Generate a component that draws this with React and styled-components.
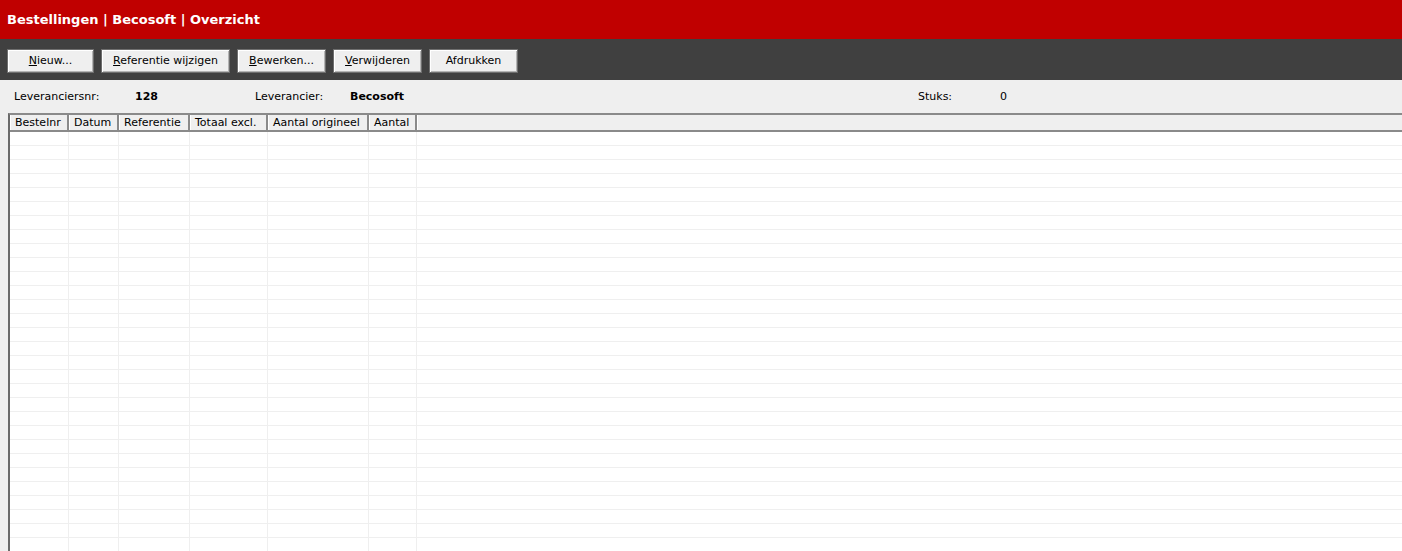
import React from 'react';
import styled, { createGlobalStyle } from 'styled-components';

const GlobalStyle = createGlobalStyle`
  html, body {
    margin: 0;
    padding: 0;
    background: #efefef;
    font-family: "DejaVu Sans", Verdana, sans-serif;
    font-size: 11px;
    color: #000;
    overflow: hidden;
  }
`;

const COLS = '59px 50px 71px 78px 101px 48px 1fr';

const PageSC = styled.div`
  width: 1402px;
  height: 551px;
  display: flex;
  flex-direction: column;
  overflow: hidden;
`;

const TitleBarSC = styled.div`
  height: 39px;
  background: #c00000;
  color: #fff;
  display: flex;
  align-items: center;
  padding: 0 7px;
  font-weight: bold;
  font-size: 13px;
  box-sizing: border-box;
`;

const ToolbarSC = styled.div`
  height: 41px;
  background: #404040;
  display: flex;
  align-items: center;
  gap: 7px;
  padding: 0 7px;
  box-sizing: border-box;
`;

const ButtonSC = styled('button', ['w'])`
  width: ${(props) => props.w}px;
  height: 24px;
  margin-top: 2px;
  background: #efefef;
  border: 1px solid #6e6e6e;
  box-shadow: inset 1px 1px 0 #fff, inset -1px -1px 0 #b4b4b4;
  font-family: inherit;
  font-size: 11px;
  color: #000;
  padding: 0;
  cursor: pointer;

  u {
    text-decoration: underline;
  }
`;

const InfoBarSC = styled.div`
  height: 33px;
  display: flex;
  align-items: center;
  padding-left: 14px;
  box-sizing: border-box;
`;

const LabelSC = styled('span', ['w'])`
  width: ${(props) => props.w}px;
  flex-shrink: 0;
`;

const ValueSC = styled('span', ['w'])`
  width: ${(props) => props.w}px;
  flex-shrink: 0;
  font-weight: ${(props) => (props.bold ? 'bold' : 'normal')};
`;

const GridAreaSC = styled.div`
  flex: 1;
  margin-left: 8px;
  border-left: 2px solid #6a6a6a;
  border-top: 2px solid #8a8a8a;
  background: #fff;
  overflow: hidden;
`;

const HeaderRowSC = styled.div`
  display: grid;
  grid-template-columns: ${COLS};
  height: 17px;
  background: #efefef;
  border-bottom: 2px solid #8a8a8a;
  box-sizing: border-box;
`;

const HeaderCellSC = styled.div`
  border-right: 2px solid #8a8a8a;
  padding-left: 5px;
  line-height: 15px;
  white-space: nowrap;
  overflow: hidden;
  box-shadow: inset 1px 0 0 #fff;

  &:last-child {
    border-right: none;
  }
`;

const RowSC = styled.div`
  display: grid;
  grid-template-columns: ${COLS};
  height: 14px;
  border-bottom: 1px solid #efefef;
  box-sizing: border-box;
`;

const CellSC = styled.div`
  border-right: 1px solid #efefef;

  &:last-child {
    border-right: none;
  }
`;

const columns = ['Bestelnr', 'Datum', 'Referentie', 'Totaal excl.', 'Aantal origineel', 'Aantal', ''];

const buttons = [
  { key: 'N', rest: 'ieuw...', w: 87 },
  { key: 'R', rest: 'eferentie wijzigen', w: 129 },
  { key: 'B', rest: 'ewerken...', w: 89 },
  { key: 'V', rest: 'erwijderen', w: 89 },
  { key: '', rest: 'Afdrukken', w: 89 },
];

const App = () => {
  const rows = Array.from({ length: 32 }, (_, i) => i);
  return (
    <PageSC>
      <GlobalStyle />
      <TitleBarSC>Bestellingen | Becosoft | Overzicht</TitleBarSC>
      <ToolbarSC>
        {buttons.map((b) => (
          <ButtonSC key={b.rest} w={b.w}>
            {b.key && <u>{b.key}</u>}
            {b.rest}
          </ButtonSC>
        ))}
      </ToolbarSC>
      <InfoBarSC>
        <LabelSC w={121}>Leveranciersnr:</LabelSC>
        <ValueSC w={120} bold>128</ValueSC>
        <LabelSC w={95}>Leverancier:</LabelSC>
        <ValueSC w={568} bold>Becosoft</ValueSC>
        <LabelSC w={82}>Stuks:</LabelSC>
        <ValueSC w={40}>0</ValueSC>
      </InfoBarSC>
      <GridAreaSC>
        <HeaderRowSC>
          {columns.map((c, i) => (
            <HeaderCellSC key={i}>{c}</HeaderCellSC>
          ))}
        </HeaderRowSC>
        {rows.map((r) => (
          <RowSC key={r}>
            {columns.map((c, i) => (
              <CellSC key={i} />
            ))}
          </RowSC>
        ))}
      </GridAreaSC>
    </PageSC>
  );
};

export default App;
